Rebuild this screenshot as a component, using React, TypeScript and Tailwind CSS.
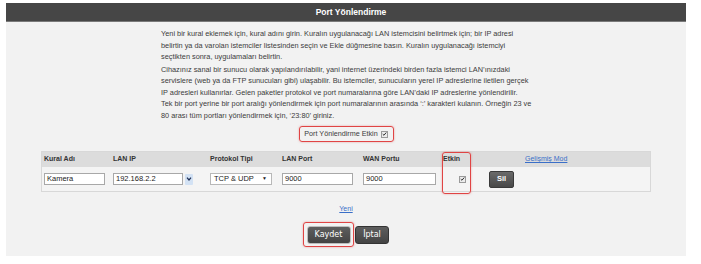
import React from "react";

// ── Small pieces ───────────────────────────────────────────────────────────
function CheckBox() {
  return (
    <span className="inline-flex h-[7px] w-[7px] items-center justify-center border border-[#9a9a9a] bg-[#ececec]">
      <svg viewBox="0 0 8 8" className="h-[6px] w-[6px]">
        <path d="M1.2 4.2 L3.1 6 L6.8 1.6" fill="none" stroke="#222" strokeWidth="1.5" />
      </svg>
    </span>
  );
}

function TextInput({ value, w }: { value: string; w: string }) {
  return (
    <div
      className={`flex h-[12px] items-center border border-[#a8a8a8] bg-white pl-[2px] text-[7.5px] text-[#222] ${w}`}
    >
      {value}
    </div>
  );
}

const P1 = [
  "Yeni bir kural eklemek için, kural adını girin. Kuralın uygulanacağı LAN istemcisini belirtmek için; bir IP adresi",
  "belirtin ya da varolan istemciler listesinden seçin ve Ekle düğmesine basın. Kuralın uygulanacağı istemciyi",
  "seçtikten sonra, uygulamaları belirtin.",
];

const P2 = [
  "Cihazınız sanal bir sunucu olarak yapılandırılabilir, yani internet üzerindeki birden fazla istemci LAN’ınızdaki",
  "servislere (web ya da FTP sunucuları gibi) ulaşabilir. Bu istemciler, sunucuların yerel IP adreslerine iletilen gerçek",
  "IP adresleri kullanırlar. Gelen paketler protokol ve port numaralarına göre LAN’daki IP adreslerine yönlendirilir.",
  "Tek bir port yerine bir port aralığı yönlendirmek için port numaralarının arasında ‘:’ karakteri kulanın. Örneğin 23 ve",
  "80 arası tüm portları yönlendirmek için, ‘23:80’ giriniz.",
];

const COLS = "grid grid-cols-[69px_97px_72px_81px_80px_32px_1fr]";

// ── Component ──────────────────────────────────────────────────────────────
export default function App() {
  return (
    <div className="h-[264px] w-[701px] bg-white pl-[6px] pt-[3px] font-['Liberation_Sans',Arial,sans-serif] text-[#3c3c3c]">
      <div className="flex h-[253px] w-[680px] flex-col bg-[#f2f2f2]">
        {/* Title bar */}
        <div className="flex h-[19px] items-center justify-center border-b border-[#7a7a7a] bg-[#464646] pl-[10px] text-[8.5px] font-bold text-white">
          Port Yönlendirme
        </div>

        {/* Help text */}
        <div className="ml-[155px] pt-[6px] text-[7.35px] leading-[11.5px] whitespace-nowrap">
          <p>
            {P1.map((l, i) => (
              <React.Fragment key={i}>
                {l}
                <br />
              </React.Fragment>
            ))}
          </p>
          <p className="mt-[1px]">
            {P2.map((l, i) => (
              <React.Fragment key={i}>
                {l}
                <br />
              </React.Fragment>
            ))}
          </p>
        </div>

        {/* Enable toggle */}
        <div className="mt-[5px] flex justify-center">
          <div className="flex h-[16px] w-[95px] items-center justify-center gap-[3px] rounded-[3px] border-[1.5px] border-[#e04444] text-[7.2px] shadow-[0_0_2px_rgba(224,68,68,0.5)]">
            <span>Port Yönlendirme Etkin</span>
            <CheckBox />
          </div>
        </div>

        {/* Rules table */}
        <div className="relative mx-[35px] mt-[9px] border border-[#d8d8d8]">
          <div className={`${COLS} h-[15px] items-center bg-[#dcdcdc] text-[7px] font-bold text-[#333]`}>
            <span className="pl-[2px]">Kural Adı</span>
            <span className="pl-[2px]">LAN IP</span>
            <span className="pl-[2px]">Protokol Tipi</span>
            <span className="pl-[2px]">LAN Port</span>
            <span className="pl-[2px]">WAN Portu</span>
            <span className="pl-[2px]">Etkin</span>
            <span className="pl-[52px] font-normal text-[#3a6fc8] underline">Gelişmiş Mod</span>
          </div>
          <div className={`${COLS} h-[24px] items-center bg-[#f4f4f4]`}>
            <div className="pl-[2px]">
              <TextInput value="Kamera" w="w-[61px]" />
            </div>
            <div className="flex items-center gap-[2px] pl-[2px]">
              <TextInput value="192.168.2.2" w="w-[70px]" />
              <div className="flex h-[11px] w-[8px] items-center justify-center rounded-[1px] bg-[#d3e2f4]">
                <svg viewBox="0 0 8 6" className="h-[4px] w-[6px]">
                  <path d="M1 1 L4 4.5 L7 1" fill="none" stroke="#1f2f55" strokeWidth="1.8" />
                </svg>
              </div>
            </div>
            <div className="pl-[2px]">
              <div className="flex h-[12px] w-[62px] items-center justify-between border border-[#b8b8b8] bg-white pl-[3px] pr-[4px] text-[7.5px] text-[#222]">
                <span>TCP &amp; UDP</span>
                <span className="text-[5px]">▼</span>
              </div>
            </div>
            <div className="pl-[2px]">
              <TextInput value="9000" w="w-[71px]" />
            </div>
            <div className="pl-[2px]">
              <TextInput value="9000" w="w-[73px]" />
            </div>
            <div className="flex pl-[18px]">
              <CheckBox />
            </div>
            <div className="pl-[16px]">
              <button className="flex h-[17px] w-[25px] items-center justify-center rounded-[2px] border border-[#3a3a3a] bg-gradient-to-b from-[#6a6a6a] to-[#484848] text-[7.5px] font-bold text-white">
                Sil
              </button>
            </div>
          </div>
          {/* Highlight round the Etkin column */}
          <div className="absolute left-[400px] top-0 h-[42px] w-[29px] rounded-[3px] border-[1.5px] border-[#e04444] shadow-[0_0_2px_rgba(224,68,68,0.5)]" />
        </div>

        {/* New rule link */}
        <div className="mt-[12px] flex h-[10px] items-center justify-center text-[7px] text-[#3a6fc8] underline">
          Yeni
        </div>

        {/* Actions */}
        <div className="mt-[8px] flex items-center justify-center gap-[1px] font-['DejaVu_Sans',Verdana,sans-serif]">
          <div className="flex h-[25px] w-[51px] items-center justify-center rounded-[3px] border-[1.5px] border-[#e04444] shadow-[0_0_2px_rgba(224,68,68,0.5)]">
            <button className="flex h-[18px] w-[44px] items-center justify-center rounded-[3px] border border-[#bdbdbd] bg-gradient-to-b from-[#5e5e5e] to-[#444] text-[8px] text-white">
              Kaydet
            </button>
          </div>
          <button className="flex h-[18px] w-[34px] items-center justify-center rounded-[3px] border border-[#333] bg-gradient-to-b from-[#5e5e5e] to-[#444] text-[8px] text-white">
            İptal
          </button>
        </div>
      </div>
    </div>
  );
}
